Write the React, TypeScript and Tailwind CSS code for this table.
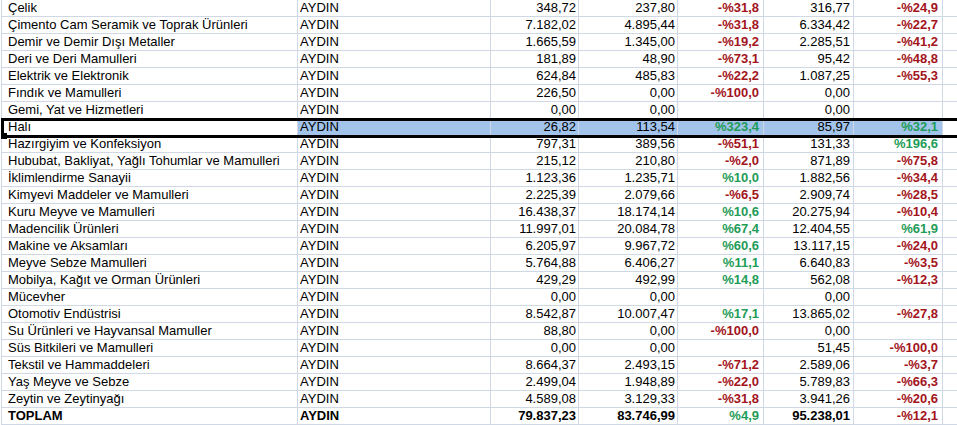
const rows: [string, string, string, string, string, string][] = [
  ["Çelik", "348,72", "237,80", "-%31,8", "316,77", "-%24,9"],
  ["Çimento Cam Seramik ve Toprak Ürünleri", "7.182,02", "4.895,44", "-%31,8", "6.334,42", "-%22,7"],
  ["Demir ve Demir Dışı Metaller", "1.665,59", "1.345,00", "-%19,2", "2.285,51", "-%41,2"],
  ["Deri ve Deri Mamulleri", "181,89", "48,90", "-%73,1", "95,42", "-%48,8"],
  ["Elektrik ve Elektronik", "624,84", "485,83", "-%22,2", "1.087,25", "-%55,3"],
  ["Fındık ve Mamulleri", "226,50", "0,00", "-%100,0", "0,00", ""],
  ["Gemi, Yat ve Hizmetleri", "0,00", "0,00", "", "0,00", ""],
  ["Halı", "26,82", "113,54", "%323,4", "85,97", "%32,1"],
  ["Hazırgiyim ve Konfeksiyon", "797,31", "389,56", "-%51,1", "131,33", "%196,6"],
  ["Hububat, Bakliyat, Yağlı Tohumlar ve Mamulleri", "215,12", "210,80", "-%2,0", "871,89", "-%75,8"],
  ["İklimlendirme Sanayii", "1.123,36", "1.235,71", "%10,0", "1.882,56", "-%34,4"],
  ["Kimyevi Maddeler ve Mamulleri", "2.225,39", "2.079,66", "-%6,5", "2.909,74", "-%28,5"],
  ["Kuru Meyve ve Mamulleri", "16.438,37", "18.174,14", "%10,6", "20.275,94", "-%10,4"],
  ["Madencilik Ürünleri", "11.997,01", "20.084,78", "%67,4", "12.404,55", "%61,9"],
  ["Makine ve Aksamları", "6.205,97", "9.967,72", "%60,6", "13.117,15", "-%24,0"],
  ["Meyve Sebze Mamulleri", "5.764,88", "6.406,27", "%11,1", "6.640,83", "-%3,5"],
  ["Mobilya, Kağıt ve Orman Ürünleri", "429,29", "492,99", "%14,8", "562,08", "-%12,3"],
  ["Mücevher", "0,00", "0,00", "", "0,00", ""],
  ["Otomotiv Endüstrisi", "8.542,87", "10.007,47", "%17,1", "13.865,02", "-%27,8"],
  ["Su Ürünleri ve Hayvansal Mamuller", "88,80", "0,00", "-%100,0", "0,00", ""],
  ["Süs Bitkileri ve Mamulleri", "0,00", "0,00", "", "51,45", "-%100,0"],
  ["Tekstil ve Hammaddeleri", "8.664,37", "2.493,15", "-%71,2", "2.589,06", "-%3,7"],
  ["Yaş Meyve ve Sebze", "2.499,04", "1.948,89", "-%22,0", "5.789,83", "-%66,3"],
  ["Zeytin ve Zeytinyağı", "4.589,08", "3.129,33", "-%31,8", "3.941,26", "-%20,6"],
  ["TOPLAM", "79.837,23", "83.746,99", "%4,9", "95.238,01", "-%12,1"],
];

const pctColor = (v: string) => (v.startsWith("-") ? "text-[#a3141c]" : "text-[#1f9c58]");

const App = () => {
  return (
    <div
      className="relative w-[957px] h-[425px] overflow-hidden bg-white pl-px text-[13px] text-black"
      style={{ fontFamily: '"Liberation Sans", Arial, sans-serif' }}
    >
      {rows.map((r, i) => {
        const selected = i === 7;
        const total = i === rows.length - 1;
        const cell = `border-r border-[#d0d7e5] truncate ${selected ? "bg-[#a2c3ea]" : ""}`;
        return (
          <div
            key={r[0]}
            className={`grid grid-cols-[296px_193px_88px_99px_86px_90px_89px_1fr] h-[17px] border-l border-b border-[#d0d7e5] leading-[16px] ${total ? "font-bold" : ""}`}
          >
            <div className="border-r border-[#d0d7e5] pl-[6px] truncate">{r[0]}</div>
            <div className={`${cell} pl-[2px]`}>AYDIN</div>
            <div className={`${cell} text-right pr-[2px]`}>{r[1]}</div>
            <div className={`${cell} text-right pr-[2px]`}>{r[2]}</div>
            <div className={`${cell} text-right pr-[4px] font-bold ${pctColor(r[3])}`}>{r[3]}</div>
            <div className={`${cell} text-right pr-[3px]`}>{r[4]}</div>
            <div className={`${cell} text-right pr-[4px] font-bold ${pctColor(r[5])}`}>{r[5]}</div>
            <div />
          </div>
        );
      })}
      {/* selected row outline + fill handle */}
      <div className="absolute left-[1px] top-[118px] h-[20px] right-[-4px] border-[3px] border-black pointer-events-none" />
      <div className="absolute left-[1px] top-[133px] w-[6px] h-[6px] bg-black" />
    </div>
  );
};

export default App;
